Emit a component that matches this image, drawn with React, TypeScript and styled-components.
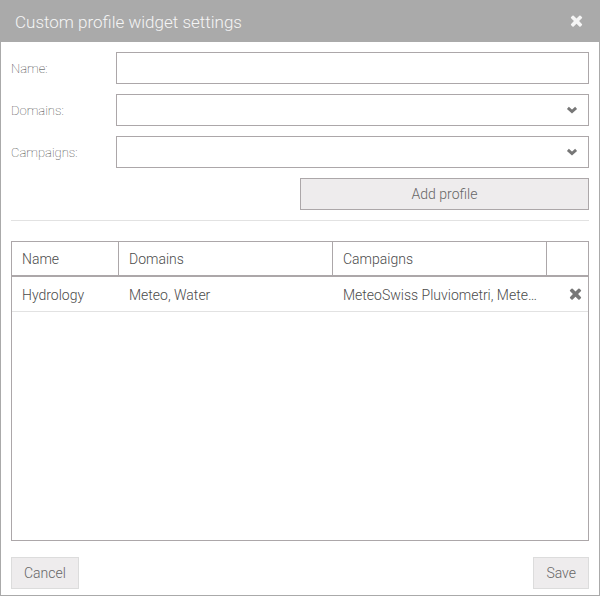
import React, { useState } from "react";
import styled, { createGlobalStyle } from "styled-components";

const GlobalStyle = createGlobalStyle`
  *, *::before, *::after { box-sizing: border-box; }
  body {
    margin: 0;
    background: #fff;
    font-family: Roboto, "Open Sans", sans-serif;
    font-size: 14px;
    font-weight: 300;
    color: #4b4b4b;
  }
  button, input, select { font: inherit; color: inherit; }
`;

const Dialog = styled.section`
  display: flex;
  flex-direction: column;
  min-height: 100vh;
  border: 1px solid #aaa;
  background: #fff;
`;

const TitleBar = styled.header`
  display: flex;
  align-items: center;
  justify-content: space-between;
  height: 41px;
  padding: 0 14px;
  background: #aaa;
  color: #f5f5f5;
`;

const Title = styled.h1`
  margin: 0;
  font-size: 17px;
  font-weight: 300;
  line-height: 20px;
`;

const IconButton = styled.button`
  display: flex;
  padding: 0 0 2px;
  border: 0;
  background: none;
  color: inherit;
  cursor: pointer;
`;

const Body = styled.div`
  display: flex;
  flex: 1;
  flex-direction: column;
  padding: 10px 10px 6px;
`;

const ProfileForm = styled.form`
  display: flex;
  flex-direction: column;
  gap: 10px;
  padding-bottom: 10px;
  border-bottom: 1px solid #e2e2e2;
`;

const Field = styled.div`
  display: grid;
  grid-template-columns: 105px minmax(0, 1fr);
  align-items: center;
`;

const Label = styled.label`
  font-size: 13px;
  font-weight: 100;
  line-height: 16px;
  padding-top: 2px;
  color: #333;
`;

const TextInput = styled.input`
  width: 100%;
  height: 32px;
  padding: 0 10px;
  border: 1px solid #aca7a9;
  border-radius: 0;
  background: #fff;
`;

const SelectBox = styled.div`
  display: grid;
  align-items: center;
  > * { grid-area: 1 / 1; }
  > svg {
    justify-self: end;
    margin-right: 11px;
    color: #777;
    pointer-events: none;
  }
`;

const Select = styled.select`
  width: 100%;
  height: 32px;
  padding: 0 32px 0 10px;
  border: 1px solid #aca7a9;
  border-radius: 0;
  background: #fff;
  appearance: none;
`;

const Button = styled.button<{ $wide?: boolean }>`
  height: 32px;
  padding: 0 12px;
  border: 1px solid ${(p) => (p.$wide ? "#aca7a9" : "#dcdcdc")};
  border-radius: 0;
  background: #eeeced;
  color: #666;
  cursor: pointer;
  ${(p) => p.$wide && "width: 50%; align-self: flex-end;"}
`;

const TablePanel = styled.div`
  flex: 1;
  margin: 20px 0 16px;
  border: 1px solid #aca7a9;
`;

const Table = styled.table`
  display: block;
`;

const HeadGroup = styled.thead`
  display: block;
`;

const BodyGroup = styled.tbody`
  display: block;
`;

const Row = styled.tr<{ $head?: boolean }>`
  display: grid;
  grid-template-columns: minmax(0, 1fr) minmax(0, 2fr) minmax(0, 2fr) 41px;
  height: 35px;
  border-bottom: ${(p) => (p.$head ? "2px solid #aca7a9" : "1px solid #e2e2e2")};
`;

const HeadCell = styled.th`
  padding: 0 10px;
  font-weight: 300;
  line-height: 34px;
  text-align: left;
  &:not(:last-child) { border-right: 1px solid #aca7a9; }
`;

const Cell = styled.td`
  padding: 0 10px;
  line-height: 36px;
  overflow: hidden;
  text-overflow: ellipsis;
  white-space: nowrap;
`;

const ActionCell = styled.td`
  display: flex;
  align-items: center;
  justify-content: flex-end;
  padding: 0 4px 0 0;
  color: #777;
`;

const Actions = styled.footer`
  display: flex;
  justify-content: space-between;
`;

const CrossIcon = () => (
  <svg width="17" height="17" viewBox="0 0 1792 1792" fill="currentColor" aria-hidden="true">
    <path d="M1490 1322q0 40-28 68l-136 136q-28 28-68 28t-68-28l-294-294-294 294q-28 28-68 28t-68-28l-136-136q-28-28-28-68t28-68l294-294-294-294q-28-28-28-68t28-68l136-136q28-28 68-28t68 28l294 294 294-294q28-28 68-28t68 28l136 136q28 28 28 68t-28 68l-294 294 294 294q28 28 28 68z" />
  </svg>
);

const ChevronIcon = () => (
  <svg width="12" height="8" viewBox="0 0 12 8" fill="none" aria-hidden="true">
    <path d="M1.9 1.9 6 5.6l4.1-3.7" stroke="currentColor" strokeWidth="2.9" />
  </svg>
);

interface Profile {
  name: string;
  domains: string;
  campaigns: string;
}

const initialProfiles: Profile[] = [
  { name: "Hydrology", domains: "Meteo, Water", campaigns: "MeteoSwiss Pluviometri, Mete…" },
];

interface SelectFieldProps {
  id: string;
  label: string;
  options: string[];
  value: string;
  onChange: (value: string) => void;
}

const SelectField = ({ id, label, options, value, onChange }: SelectFieldProps) => (
  <Field>
    <Label htmlFor={id}>{label}</Label>
    <SelectBox>
      <Select id={id} value={value} onChange={(e) => onChange(e.target.value)}>
        <option value="" />
        {options.map((option) => (
          <option key={option}>{option}</option>
        ))}
      </Select>
      <ChevronIcon />
    </SelectBox>
  </Field>
);

export default function App() {
  const [profiles, setProfiles] = useState(initialProfiles);
  const [name, setName] = useState("");
  const [domains, setDomains] = useState("");
  const [campaigns, setCampaigns] = useState("");

  const addProfile = (event: React.FormEvent) => {
    event.preventDefault();
    if (!name) return;
    setProfiles([...profiles, { name, domains, campaigns }]);
    setName("");
    setDomains("");
    setCampaigns("");
  };

  return (
    <>
      <GlobalStyle />
      <Dialog role="dialog" aria-labelledby="dialog-title">
        <TitleBar>
          <Title id="dialog-title">Custom profile widget settings</Title>
          <IconButton type="button" aria-label="Close">
            <CrossIcon />
          </IconButton>
        </TitleBar>
        <Body>
          <ProfileForm onSubmit={addProfile}>
            <Field>
              <Label htmlFor="name">Name:</Label>
              <TextInput id="name" type="text" value={name} onChange={(e) => setName(e.target.value)} />
            </Field>
            <SelectField id="domains" label="Domains:" options={["Meteo", "Water"]} value={domains} onChange={setDomains} />
            <SelectField
              id="campaigns"
              label="Campaigns:"
              options={["MeteoSwiss Pluviometri"]}
              value={campaigns}
              onChange={setCampaigns}
            />
            <Button type="submit" $wide>
              Add profile
            </Button>
          </ProfileForm>
          <TablePanel>
            <Table>
              <HeadGroup>
                <Row $head>
                  <HeadCell scope="col">Name</HeadCell>
                  <HeadCell scope="col">Domains</HeadCell>
                  <HeadCell scope="col">Campaigns</HeadCell>
                  <HeadCell scope="col" aria-label="Actions" />
                </Row>
              </HeadGroup>
              <BodyGroup>
                {profiles.map((profile, index) => (
                  <Row key={index}>
                    <Cell>{profile.name}</Cell>
                    <Cell>{profile.domains}</Cell>
                    <Cell>{profile.campaigns}</Cell>
                    <ActionCell>
                      <IconButton
                        type="button"
                        aria-label={`Remove ${profile.name}`}
                        onClick={() => setProfiles(profiles.filter((_, i) => i !== index))}
                      >
                        <CrossIcon />
                      </IconButton>
                    </ActionCell>
                  </Row>
                ))}
              </BodyGroup>
            </Table>
          </TablePanel>
          <Actions>
            <Button type="button">Cancel</Button>
            <Button type="button">Save</Button>
          </Actions>
        </Body>
      </Dialog>
    </>
  );
}
